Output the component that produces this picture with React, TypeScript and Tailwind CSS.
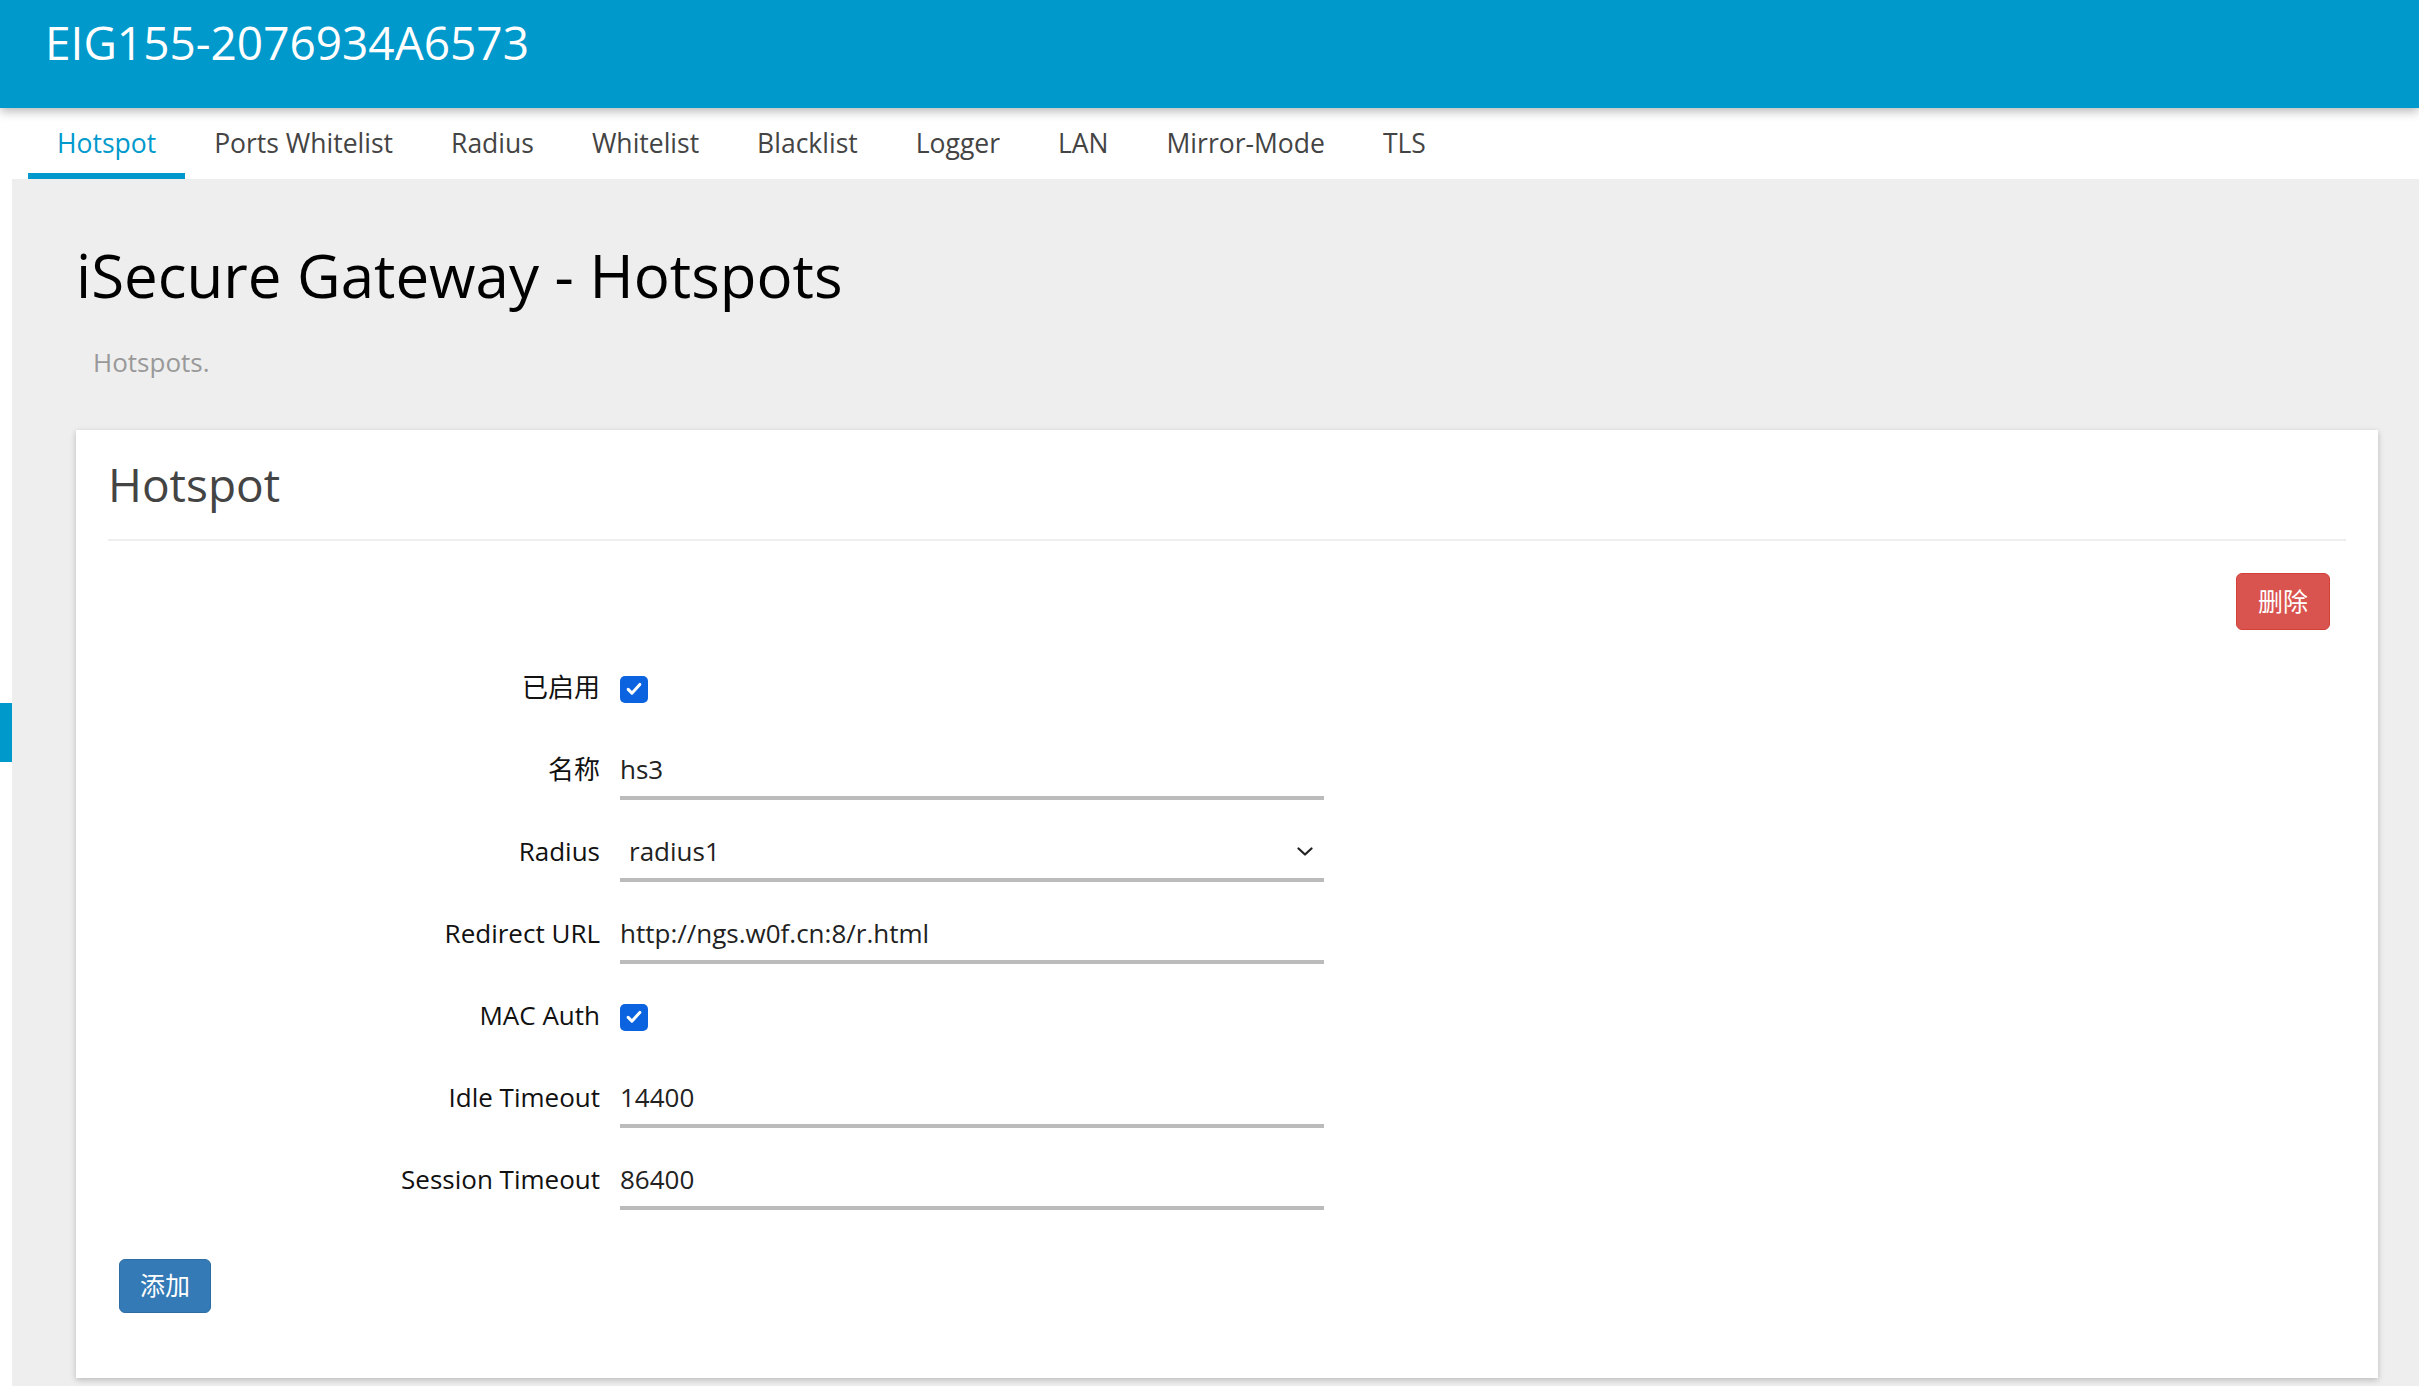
import React from 'react';

const tabs = ['Hotspot', 'Ports Whitelist', 'Radius', 'Whitelist', 'Blacklist', 'Logger', 'LAN', 'Mirror-Mode', 'TLS'];

function Checkbox(): React.ReactElement {
  return (
    <span className="flex h-[27px] w-[28px] items-center justify-center rounded-[5px] bg-[#0b63df]">
      <svg viewBox="0 0 24 24" className="h-[20px] w-[20px]" fill="none" stroke="white" strokeWidth={3.6} strokeLinecap="round" strokeLinejoin="round">
        <path d="M5 12.5l4.5 4.5L19 6.5" />
      </svg>
    </span>
  );
}

function Row({ label, children }: { label: string; children: React.ReactNode }): React.ReactElement {
  return (
    <div className="grid h-[58px] grid-cols-[492px_704px] gap-x-[20px]">
      <label className="flex h-[54px] items-center justify-end text-[26px] text-[#111]">{label}</label>
      <div className="flex h-[58px] items-center">{children}</div>
    </div>
  );
}

function TextField({ value }: { value: string }): React.ReactElement {
  return (
    <input
      readOnly
      value={value}
      className="h-[58px] w-full border-b-4 border-[#bbbbbb] bg-transparent p-0 text-[26px] text-[#222] outline-none"
    />
  );
}

export default function App(): React.ReactElement {
  return (
    <div className="flex h-screen flex-col overflow-hidden bg-white font-['Open_Sans','Noto_Sans_CJK_SC',sans-serif]">
      <header className="relative z-10 h-[108px] shrink-0 bg-[#0099cc] px-[45px] pt-[15px] shadow-[0_3px_10px_rgba(0,0,0,0.3)]">
        <div className="text-[46px] leading-[55px] text-white">EIG155-2076934A6573</div>
      </header>

      <nav className="flex h-[71px] shrink-0 bg-white pl-[28px]">
        {tabs.map((t, i) => (
          <div
            key={t}
            className={
              i === 0
                ? 'flex h-full items-center border-b-[6px] border-[#0099cc] px-[29px] pt-[6px] text-[26.5px] text-[#0099cc]'
                : 'flex h-full items-center border-b-[6px] border-transparent px-[29px] pt-[6px] text-[26.5px] text-[#444]'
            }
          >
            {t}
          </div>
        ))}
      </nav>

      <div className="flex flex-1">
        <div className="w-[12px] shrink-0 bg-white">
          <div className="mt-[524px] h-[59px] bg-[#0099cc]" />
        </div>

        <main className="flex-1 bg-[#eeeeee] pl-[64px] pr-[41px] pt-[63px]">
          <h1 className="text-[60px] leading-[66px] text-black">iSecure Gateway - Hotspots</h1>
          <p className="mt-[35px] pl-[17px] text-[26px] leading-[39px] text-[#999]">Hotspots.</p>

          <section className="mt-[48px] bg-white px-[32px] pb-[65px] pt-[27px] shadow-[0_2px_6px_rgba(0,0,0,0.22)]">
            <h2 className="border-b-2 border-[#eeeeee] pb-[27px] text-[46px] leading-[55px] text-[#444]">Hotspot</h2>

            <div className="flex justify-end pr-[16px] pt-[32px]">
              <button
                type="button"
                className="flex h-[57px] w-[94px] items-center justify-center rounded-[6px] border border-[#d43f3a] bg-[#d9534f] text-[25px] text-white"
              >
                删除
              </button>
            </div>

            <div className="mt-[30px] flex flex-col gap-[24px]">
              <Row label="已启用">
                <Checkbox />
              </Row>
              <Row label="名称">
                <TextField value="hs3" />
              </Row>
              <Row label="Radius">
                <div className="flex h-[58px] w-full items-center justify-between border-b-4 border-[#bbbbbb] pl-[9px] pr-[11px] text-[26px] text-[#222]">
                  <span>radius1</span>
                  <svg viewBox="0 0 16 9" className="h-[9px] w-[16px]" fill="none" stroke="#222" strokeWidth={2.2} strokeLinecap="round" strokeLinejoin="round">
                    <path d="M1.5 1.5L8 7.5l6.5-6" />
                  </svg>
                </div>
              </Row>
              <Row label="Redirect URL">
                <TextField value="http://ngs.w0f.cn:8/r.html" />
              </Row>
              <Row label="MAC Auth">
                <Checkbox />
              </Row>
              <Row label="Idle Timeout">
                <TextField value="14400" />
              </Row>
              <Row label="Session Timeout">
                <TextField value="86400" />
              </Row>
            </div>

            <button
              type="button"
              className="ml-[11px] mt-[49px] flex h-[54px] w-[92px] items-center justify-center rounded-[6px] border border-[#2e6da4] bg-[#337ab7] text-[25px] text-white"
            >
              添加
            </button>
          </section>
        </main>
      </div>
    </div>
  );
}
